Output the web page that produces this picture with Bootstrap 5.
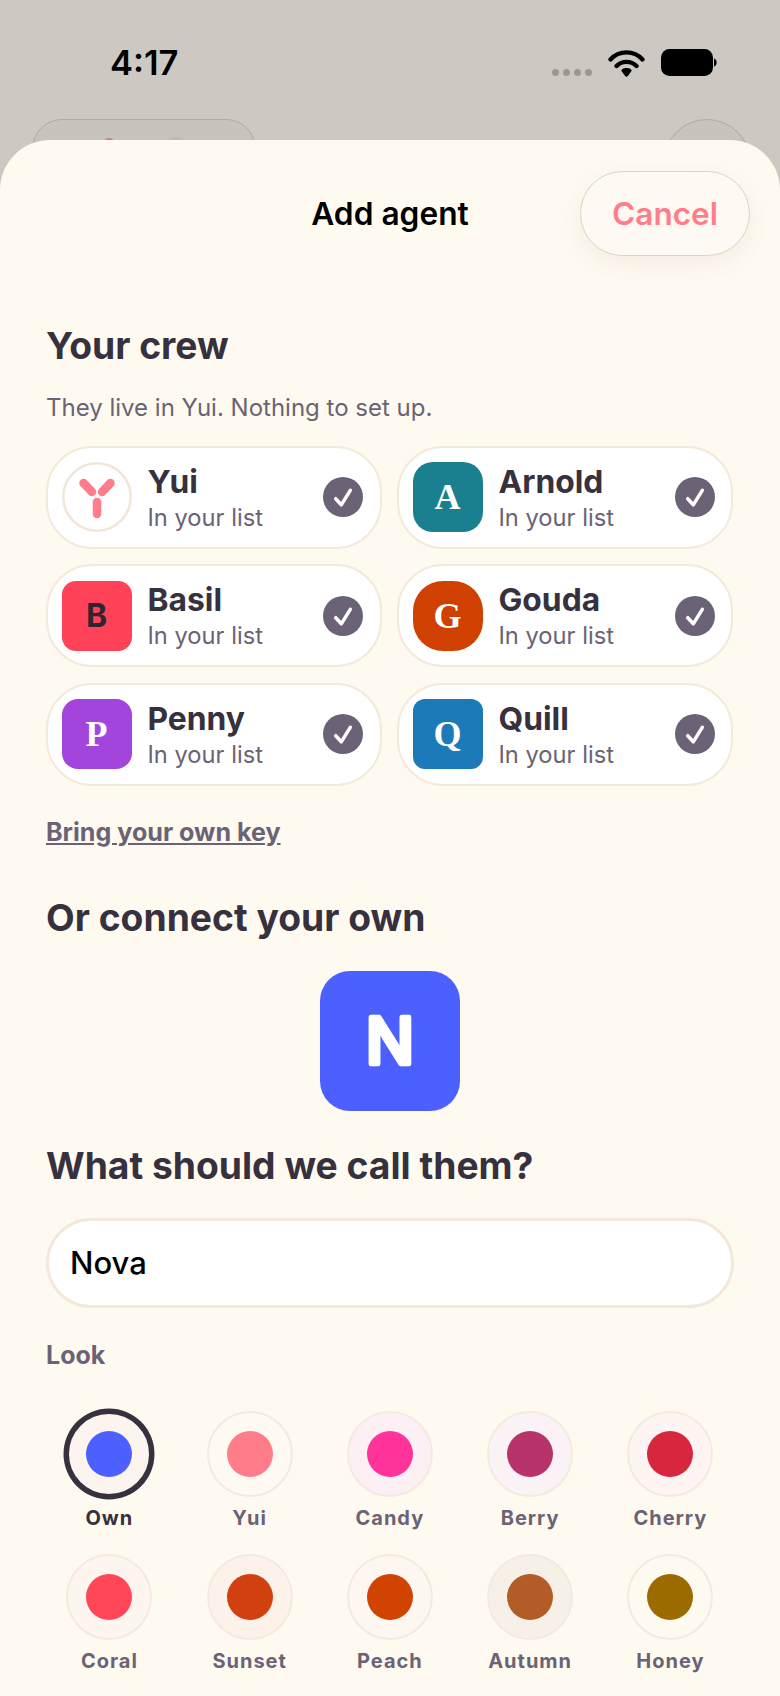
<!DOCTYPE html>
<html lang="en">
<head>
    <meta charset="UTF-8">
    <meta name="viewport" content="width=device-width, initial-scale=1.0">
    <title>Add agent</title>
    <link href="https://cdn.jsdelivr.net/npm/bootstrap@5.3.0/dist/css/bootstrap.min.css" rel="stylesheet">
    <style>
        html, body {
            height: 1696px;
            overflow: hidden;
        }
        body {
            background-color: #cdc9c2;
            font-family: "Inter", "Liberation Sans", sans-serif;
            position: relative;
        }
        .status-row {
            height: 120px;
            padding: 49px 62px 0 110px;
        }
        .clock {
            font-size: 34.5px;
            font-weight: 600;
            line-height: 36px;
            margin-top: -4px;
            color: #000;
        }
        .signal-dots {
            gap: 4px;
            margin-top: 20px;
        }
        .signal-dots i {
            width: 7px;
            height: 7px;
            border-radius: 50%;
            background: #9b9893;
        }
        .peek-pill {
            position: absolute;
            top: 119px;
            left: 32px;
            width: 224px;
            height: 60px;
            border-radius: 36px;
            background: #c7c4bc;
            border: 1px solid #aeaba3;
        }
        .peek-pill i {
            position: absolute;
            border-radius: 50%;
        }
        .peek-red {
            left: 70px;
            top: 18px;
            width: 12px;
            height: 12px;
            background: #d9757c;
        }
        .peek-grey {
            left: 132px;
            top: 17px;
            width: 22px;
            height: 22px;
            background: #bdbab1;
        }
        .peek-circle {
            position: absolute;
            top: 119px;
            left: 663px;
            width: 88px;
            height: 88px;
            border-radius: 50%;
            background: #c7c4bc;
            border: 1px solid #aeaba3;
        }
        .sheet {
            position: absolute;
            top: 140px;
            left: 0;
            right: 0;
            bottom: 0;
            background: #fffaf0;
            border-radius: 50px 50px 0 0;
            padding: 31px 46px 0;
            color: #37313f;
        }
        .sheet-head {
            height: 85px;
            position: relative;
        }
        .sheet-title {
            font-size: 31.7px;
            font-weight: 600;
            color: #000;
        }
        .cancel-btn {
            position: absolute;
            top: 0;
            right: -16px;
            width: 170px;
            height: 85px;
            padding: 0;
            border-radius: 43px;
            border: 1px solid #d9d4cb;
            background: #fff9f3;
            color: #ff7d8a;
            font-size: 31.5px;
            font-weight: 600;
            box-shadow: 0 8px 22px rgba(90, 70, 50, .07);
        }
        .sec-title {
            font-size: 37.25px;
            font-weight: 700;
            line-height: 44px;
            margin: 0;
            color: #37313f;
        }
        .crew-title { margin-top: 68px; }
        .sec-note {
            font-size: 24px;
            line-height: 30px;
            color: #6b6375;
            margin: 25px 0 22.5px;
        }
        .crew-grid {
            display: grid;
            grid-template-columns: 335.5px 336px;
            column-gap: 15.5px;
            row-gap: 15.5px;
        }
        .crew-item {
            height: 103px;
            border: 2.5px solid #f3eadc;
            border-radius: 46px;
            background: #fff;
            padding: 0 16.5px 0 13.5px;
        }
        .crew-tile {
            width: 70px;
            height: 70px;
            color: #fff;
            font-family: "Liberation Serif", serif;
            font-weight: 700;
            font-size: 36px;
            flex-shrink: 0;
        }
        .crew-tile.sans-letter {
            font-family: "Inter", sans-serif;
            font-size: 32px;
        }
        .crew-text {
            padding-top: 2px;
        }
        .crew-name {
            font-size: 31.8px;
            font-weight: 650;
            line-height: 36px;
            color: #37313f;
        }
        .crew-sub {
            font-size: 23.7px;
            line-height: 30px;
            color: #6b6375;
            margin-top: 3px;
        }
        .crew-check {
            width: 40px;
            height: 40px;
            border-radius: 50%;
            background: #6b6375;
            flex-shrink: 0;
        }
        .own-key {
            font-size: 25.1px;
            font-weight: 650;
            color: #6b6375;
            line-height: 30px;
            margin-top: 31px;
        }
        .connect-title { margin-top: 49px; }
        .big-tile {
            width: 140px;
            height: 140px;
            margin-top: 31px;
            border-radius: 30px;
            background: #4b60ff;
        }
        .big-tile text {
            font-family: "Inter", sans-serif;
            font-size: 64px;
            font-weight: 500;
            fill: #fff;
            stroke: #fff;
            stroke-width: 4.5px;
            stroke-linejoin: round;
        }
        .call-title { margin-top: 33px; }
        .name-field {
            height: 90px;
            margin-top: 30.5px;
            border: 3px solid #f3e8da;
            border-radius: 45px;
            background: #fff;
            padding: 0 21px;
            font-size: 31px;
            font-weight: 500;
            color: #000;
        }
        .look-label {
            font-size: 25px;
            font-weight: 650;
            color: #6b6375;
            line-height: 30px;
            margin-top: 32px;
        }
        .swatch-grid {
            display: grid;
            grid-template-columns: repeat(5, 140.25px);
            margin: 41px -7px 0 -6.75px;
            row-gap: 24px;
        }
        .swatch-ring {
            width: 86px;
            height: 86px;
            border-radius: 50%;
            border: 2px solid #f3ebdf;
        }
        .swatch-ring.picked {
            box-shadow: 0 0 0 2.5px #37313f;
            border: 3.5px solid #37313f;
        }
        .swatch-dot {
            width: 46px;
            height: 46px;
            border-radius: 50%;
        }
        .swatch-name {
            font-size: 20px;
            font-weight: 650;
            line-height: 24px;
            letter-spacing: 1px;
            color: #6b6375;
            margin-top: 9px;
        }
    </style>
</head>
<body>
    <div class="status-row d-flex justify-content-between">
        <span class="clock">4:17</span>
        <div class="d-flex align-items-start" style="gap:16px">
            <div class="signal-dots d-flex align-items-end"><i></i><i></i><i></i><i></i></div>
            <svg width="37" height="28" viewBox="0 0 37 28"><path d="M2.500 10.500 C11 1 26 1 34.500 10.500 M8.500 17 C14 11.500 23 11.500 28.500 17" fill="none" stroke="#000" stroke-width="4.300" stroke-linecap="round"/><path d="M14.500 20 C16.500 18.800 20.500 18.800 22.500 20 C23.800 20.800 24 21.800 23 22.800 L19.800 27 C19 28 18 28 17.200 27 L14 22.800 C13 21.800 13.200 20.800 14.500 20 Z" fill="#000"/></svg>
            <svg width="57" height="27" viewBox="0 0 57 27"><rect x="0" y="0" width="52" height="27" rx="8.500" fill="#000"/><path d="M53 9.500 C56.500 10 56.500 17 53 17.500 Z" fill="#000"/></svg>
        </div>
    </div>
    <div class="peek-pill"><i class="peek-red"></i><i class="peek-grey"></i></div>
    <div class="peek-circle"></div>

    <div class="sheet">
        <div class="sheet-head d-flex align-items-center justify-content-center">
            <span class="sheet-title">Add agent</span>
            <button class="cancel-btn" type="button">Cancel</button>
        </div>

        <h2 class="sec-title crew-title">Your crew</h2>
        <p class="sec-note">They live in Yui. Nothing to set up.</p>
        <div class="crew-grid" id="crewGrid"></div>

        <div class="own-key"><u>Bring your own key</u></div>

        <h2 class="sec-title connect-title">Or connect your own</h2>
        <div class="d-flex justify-content-center">
            <div class="big-tile">
                <svg width="140" height="140" viewBox="0 0 140 140"><text x="70" y="93" text-anchor="middle">N</text></svg>
            </div>
        </div>
        <h2 class="sec-title call-title">What should we call them?</h2>
        <div class="name-field d-flex align-items-center">Nova</div>
        <div class="look-label">Look</div>
        <div class="swatch-grid" id="swatchGrid"></div>
    </div>

    <script>
        // crew list
        const crew = [
            { name: 'Yui', logo: true },
            { name: 'Arnold', letter: 'A', bg: '#1a8090', radius: 20 },
            { name: 'Basil', letter: 'B', bg: '#ff4257', color: '#2f2530', sans: true, radius: 14 },
            { name: 'Gouda', letter: 'G', bg: '#d04000', radius: 30 },
            { name: 'Penny', letter: 'P', bg: '#a345dc', radius: 16 },
            { name: 'Quill', letter: 'Q', bg: '#1c7ab8', radius: 12 }
        ];
        const yuiLogo = '<svg class="flex-shrink-0" width="70" height="70" viewBox="0 0 70 70"><circle cx="35" cy="35" r="33.700" fill="#fff" stroke="#f0e7d9" stroke-width="2.500"/><g stroke="#ff7d8a" stroke-width="8.500" stroke-linecap="round"><path d="M21.500 21 L30 30"/><path d="M48.500 21 L40 30"/><path d="M35 40 L35 52"/></g></svg>';
        const checkIcon = '<svg width="22" height="22" viewBox="0 0 22 22"><path d="M3.700 12.700 L9.300 18.800 L18.300 4.300" fill="none" stroke="#fff" stroke-width="3.500" stroke-linecap="round" stroke-linejoin="round"/></svg>';

        document.getElementById('crewGrid').innerHTML = crew.map(c => {
            const tile = c.logo ? yuiLogo :
                `<div class="crew-tile ${c.sans ? 'sans-letter' : ''} d-flex align-items-center justify-content-center" style="background:${c.bg};border-radius:${c.radius}px;color:${c.color || '#fff'}">${c.letter}</div>`;
            return `<div class="crew-item d-flex align-items-center">
                ${tile}
                <div class="crew-text flex-grow-1 ms-3">
                    <div class="crew-name">${c.name}</div>
                    <div class="crew-sub">In your list</div>
                </div>
                <div class="crew-check d-flex align-items-center justify-content-center">${checkIcon}</div>
            </div>`;
        }).join('');

        // colour swatches
        const swatches = [
            ['Own', '#4b60ff', '#fdf4f0', true], ['Yui', '#ff7d8a', '#fffaf1'], ['Candy', '#ff3399', '#fdf0f5'],
            ['Berry', '#b8336a', '#fbf2f5'], ['Cherry', '#d7263d', '#fdf4f3'],
            ['Coral', '#ff4757', '#fef5f0'], ['Sunset', '#d1400f', '#fdf2ea'], ['Peach', '#d14300', '#fef6f0'],
            ['Autumn', '#b35c27', '#f6f0e7'], ['Honey', '#9c6b00', '#fffaf0']
        ];
        document.getElementById('swatchGrid').innerHTML = swatches.map(([name, dot, ring, picked]) => `
            <div class="d-flex flex-column align-items-center">
                <div class="swatch-ring d-flex align-items-center justify-content-center ${picked ? 'picked' : ''}" style="background:${ring}">
                    <div class="swatch-dot" style="background:${dot}"></div>
                </div>
                <div class="swatch-name"${picked ? ' style="color:#37313f"' : ''}>${name}</div>
            </div>`).join('');
    </script>
    <script src="https://cdn.jsdelivr.net/npm/bootstrap@5.3.0/dist/js/bootstrap.bundle.min.js"></script>
</body>
</html>
